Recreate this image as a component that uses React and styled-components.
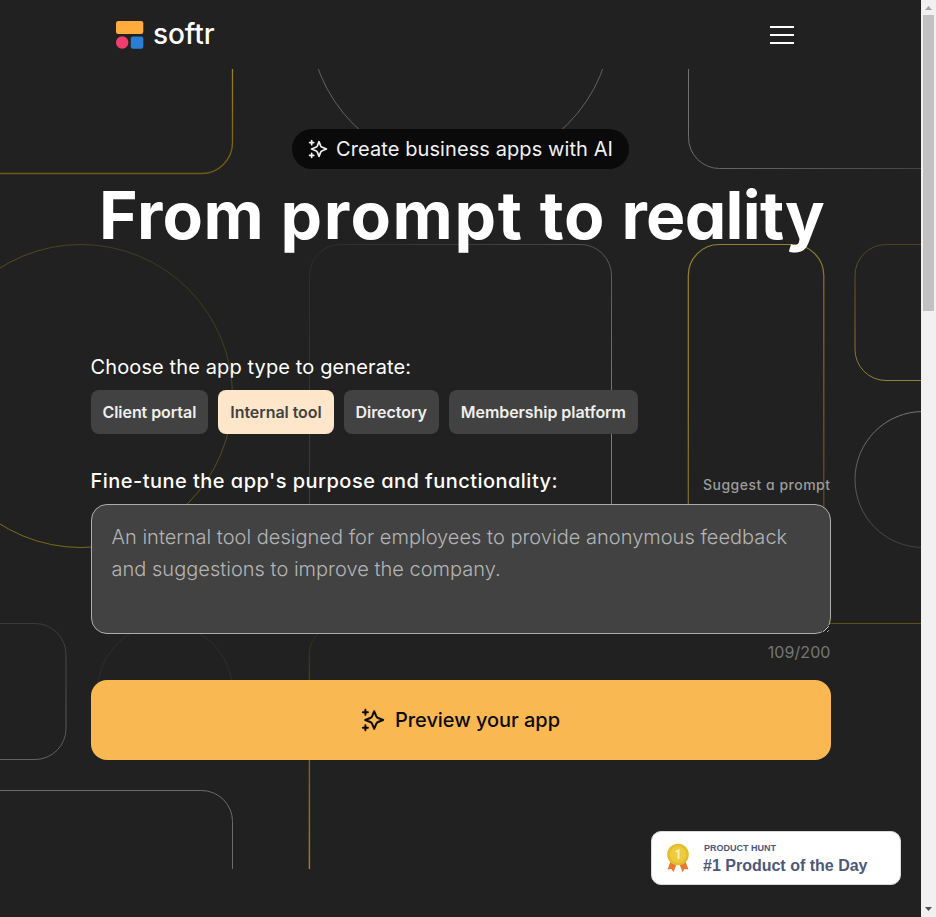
import React from "react";
import styled, { createGlobalStyle } from "styled-components";

const GlobalStyle = createGlobalStyle`
  *, *::before, *::after { box-sizing: border-box; }
  body { margin: 0; background: #212121; overflow: hidden; }
  button, textarea { font-family: inherit; }
`;

const Window = styled.div`
  display: flex;
  width: 936px;
  height: 917px;
  font-family: Inter, "Liberation Sans", sans-serif;
  color: #fff;
  overflow: hidden;
`;

const Page = styled.div`
  position: relative;
  flex: 1;
  min-width: 0;
  display: flex;
  flex-direction: column;
  background: #212121;
`;

const Header = styled.header`
  display: flex;
  align-items: center;
  justify-content: space-between;
  height: 69px;
  padding: 1px 127px 0 116px;
`;

const Brand = styled.a`
  display: flex;
  align-items: center;
  gap: 9px;
`;

const BrandMark = styled.svg`
  display: block;
  width: 28px;
  height: 28px;
`;

const BrandName = styled.span`
  font-size: 28px;
  font-weight: 500;
  line-height: 32px;
  margin-top: -2px;
  letter-spacing: -0.1px;
  font-feature-settings: "cv11";
`;

const MenuButton = styled.button`
  display: flex;
  flex-direction: column;
  gap: 6px;
  width: 24px;
  padding: 0;
  border: 0;
  background: none;
`;

const MenuLine = styled.span`
  height: 2px;
  background: #fff;
`;

const Hero = styled.main`
  position: relative;
  flex: 1;
`;

const Pattern = styled.svg`
  position: absolute;
  top: 0;
  left: 0;
  width: 921px;
  height: 800px;
`;

const Content = styled.div`
  position: relative;
  display: flex;
  flex-direction: column;
  width: 740px;
  margin: 0 auto;
  padding-top: 60px;
`;

const Pill = styled.div`
  display: flex;
  align-items: center;
  align-self: center;
  gap: 8px;
  height: 40px;
  padding: 0 16px;
  border-radius: 20px;
  background: #0a0a0a;
  color: #f2f2f2;
  font-size: 20px;
  letter-spacing: 0.09px;
`;

const Sparkle = styled.svg`
  display: block;
  flex: none;
  width: ${(p) => p.$size}px;
  height: ${(p) => p.$size}px;
`;

const Title = styled.h1`
  margin: 6px 0 0;
  padding-left: 2px;
  height: 80px;
  font-size: 66px;
  font-weight: 700;
  line-height: 80px;
  letter-spacing: 0.7px;
  text-align: center;
  white-space: nowrap;
  font-feature-settings: "cv11";
`;

const Word = styled.span`
  letter-spacing: ${(p) => p.$track}px;
`;

const Form = styled.form`
  display: flex;
  flex-direction: column;
  margin-top: 99px;
`;

const Label = styled.label`
  font-size: 20px;
  font-weight: ${(p) => (p.$geometric ? 500 : 400)};
  line-height: 26px;
  letter-spacing: ${(p) => (p.$geometric ? "0.47px" : "0.12px")};
  font-feature-settings: ${(p) => (p.$geometric ? '"cv11"' : "normal")};
  white-space: nowrap;
`;

const TypeList = styled.div`
  display: flex;
  gap: 10px;
  margin-top: 10px;
`;

const TypeButton = styled.button`
  height: 44px;
  padding: 0 12px;
  border: 0;
  border-radius: 8px;
  background: ${(p) => (p.$active ? "#fde6ca" : "#424242")};
  color: ${(p) => (p.$active ? "#424242" : "#efefef")};
  font-size: 16px;
  font-weight: 600;
  letter-spacing: -0.06px;
  white-space: nowrap;
`;

const PromptHead = styled.div`
  display: flex;
  align-items: flex-start;
  justify-content: space-between;
  margin-top: 34px;
  height: 36px;
`;

const Suggest = styled.button`
  padding: 0;
  margin-top: 7px;
  border: 0;
  background: none;
  color: #9c9c9c;
  font-size: 14px;
  font-weight: 500;
  line-height: 20px;
  letter-spacing: 0.5px;
  font-feature-settings: "cv11";
`;

const PromptInput = styled.textarea`
  display: block;
  width: 100%;
  height: 130px;
  padding: 16px 20px;
  border: 1px solid #acacac;
  border-radius: 16px;
  outline: 0;
  background: #424242;
  color: #b4b4b4;
  font-size: 20px;
  font-weight: 300;
  line-height: 32px;
  letter-spacing: 0.02px;
`;

const Counter = styled.div`
  margin-top: 8px;
  color: #767676;
  font-size: 16px;
  line-height: 20px;
  letter-spacing: 0.08px;
  text-align: right;
`;

const PreviewButton = styled.button`
  display: flex;
  align-items: center;
  justify-content: center;
  gap: 10px;
  height: 80px;
  margin-top: 18px;
  border: 0;
  border-radius: 16px;
  background: #f9b852;
  color: #0c0a06;
  font-size: 20px;
  font-weight: 500;
  letter-spacing: -0.05px;
`;

const HuntBadge = styled.a`
  position: absolute;
  right: 20px;
  bottom: 32px;
  display: flex;
  align-items: center;
  gap: 14px;
  width: 250px;
  height: 54px;
  padding-left: 15px;
  border: 1px solid #d9d9df;
  border-radius: 10px;
  background: #fff;
  color: #4b587c;
  font-family: "Liberation Sans", Arial, sans-serif;
  font-weight: 700;
`;

const Medal = styled.svg`
  display: block;
  width: 22px;
  height: 30px;
`;

const HuntText = styled.div`
  display: flex;
  flex-direction: column;
`;

const HuntSource = styled.span`
  padding-left: 1px;
  font-size: 9px;
  line-height: 14px;
`;

const HuntRank = styled.span`
  margin-top: 1px;
  font-size: 16px;
  line-height: 20px;
`;

const Scrollbar = styled.div`
  display: flex;
  flex-direction: column;
  align-items: center;
  width: 15px;
  background: #f1f1f1;
`;

const ScrollArrow = styled.svg`
  display: block;
  width: 15px;
  height: 15px;
`;

const ScrollTrack = styled.div`
  flex: 1;
`;

const ScrollThumb = styled.div`
  width: 11px;
  height: 296px;
  background: #c1c1c1;
`;

function SparkleIcon({ size }) {
  return (
    <Sparkle $size={size} viewBox="0 0 24 24" fill="none" stroke="currentColor" strokeWidth="2" strokeLinecap="round" strokeLinejoin="round">
      <path d="M13.2 3.2 15.2 8.2Q15.8 9.5 17.1 10L22.2 12 17.1 14Q15.8 14.5 15.2 15.8L13.2 20.8 11.2 15.8Q10.6 14.5 9.3 14L4.2 12 9.3 10Q10.6 9.5 11.2 8.2Z" />
      <path d="M4.4 1.8v5M1.9 4.3h5M4.4 17.2v5M1.9 19.7h5" />
    </Sparkle>
  );
}

function GridPattern() {
  return (
    <Pattern viewBox="0 69 921 800" fill="none">
      <defs>
        <linearGradient id="goldDown" gradientUnits="userSpaceOnUse" x1="0" y1="69" x2="0" y2="173">
          <stop stopColor="#9c8026" />
          <stop offset="1" stopColor="#705a10" />
        </linearGradient>
        <linearGradient id="grayDown" gradientUnits="userSpaceOnUse" x1="688" y1="69" x2="921" y2="168">
          <stop stopColor="#737373" />
          <stop offset="1" stopColor="#444444" />
        </linearGradient>
        <linearGradient id="goldCircle" gradientUnits="userSpaceOnUse" x1="190" y1="290" x2="0" y2="500">
          <stop stopColor="#3e3a20" />
          <stop offset="1" stopColor="#80691c" />
        </linearGradient>
        <linearGradient id="panel" gradientUnits="userSpaceOnUse" x1="309" y1="245" x2="611" y2="430">
          <stop stopColor="#2b2b2b" />
          <stop offset="0.6" stopColor="#454545" />
          <stop offset="1" stopColor="#7a7a7a" />
        </linearGradient>
        <linearGradient id="tallGold" gradientUnits="userSpaceOnUse" x1="688" y1="400" x2="824" y2="500">
          <stop stopColor="#94802d" />
          <stop offset="1" stopColor="#5b501f" />
        </linearGradient>
        <linearGradient id="sideGold" gradientUnits="userSpaceOnUse" x1="900" y1="245" x2="900" y2="380">
          <stop stopColor="#4b4422" />
          <stop offset="1" stopColor="#94813a" />
        </linearGradient>
        <linearGradient id="sideCircle" gradientUnits="userSpaceOnUse" x1="880" y1="411" x2="900" y2="547">
          <stop stopColor="#777777" />
          <stop offset="1" stopColor="#414141" />
        </linearGradient>
        <linearGradient id="leftBox" gradientUnits="userSpaceOnUse" x1="0" y1="624" x2="0" y2="760">
          <stop stopColor="#3a3a3a" />
          <stop offset="1" stopColor="#636363" />
        </linearGradient>
        <linearGradient id="goldStem" gradientUnits="userSpaceOnUse" x1="0" y1="640" x2="0" y2="869">
          <stop stopColor="#2b2921" />
          <stop offset="0.5" stopColor="#7c6010" />
          <stop offset="1" stopColor="#a58114" />
        </linearGradient>
      </defs>
      <path stroke="url(#goldDown)" strokeWidth="1.3" d="M0 173.5H201.5A31 31 0 0 0 232.5 142.5V69" />
      <circle stroke="#626262" cx="460.5" cy="17" r="151.5" />
      <path stroke="url(#grayDown)" d="M688.5 69V137.5A31 31 0 0 0 719.5 168.5H921" />
      <circle stroke="url(#goldCircle)" cx="81" cy="396" r="151.5" />
      <rect stroke="url(#panel)" x="309.5" y="244.5" width="302" height="303" rx="31" />
      <rect stroke="url(#tallGold)" strokeWidth="1.2" x="688.3" y="244.5" width="135.5" height="303" rx="31" />
      <rect stroke="url(#sideGold)" x="855" y="244.5" width="136" height="136" rx="31" />
      <circle stroke="url(#sideCircle)" cx="923" cy="479.5" r="68" />
      <path stroke="#5e4f14" strokeWidth="1.2" d="M800 623.5H921" />
      <rect stroke="url(#leftBox)" x="-70" y="623.5" width="136" height="136" rx="31" />
      <circle stroke="#2e2e2e" cx="165" cy="691.5" r="67.5" />
      <path stroke="url(#goldStem)" strokeWidth="1.4" d="M340 623.5A31 31 0 0 0 309.4 654.5V869" />
      <path stroke="#6c6c6c" d="M0 790.5H201.5A31 31 0 0 1 232.5 821.5V869" />
    </Pattern>
  );
}

const appTypes = ["Client portal", "Internal tool", "Directory", "Membership platform"];

export default function App() {
  return (
    <Window>
      <GlobalStyle />
      <Page>
        <Header>
          <Brand>
            <BrandMark viewBox="0 0 28 28">
              <rect width="27.3" height="13" rx="2.3" fill="#ffab3d" />
              <circle cx="6.2" cy="21.5" r="6.2" fill="#ef3e6e" />
              <rect x="14.8" y="15.4" width="12.5" height="12.4" rx="2" fill="#2a7fd4" />
            </BrandMark>
            <BrandName>softr</BrandName>
          </Brand>
          <MenuButton type="button" aria-label="Menu">
            <MenuLine />
            <MenuLine />
            <MenuLine />
          </MenuButton>
        </Header>
        <Hero>
          <GridPattern />
          <Content>
            <Pill>
              <SparkleIcon size={20} />
              Create business apps with AI
            </Pill>
            <Title>
              <Word $track={0.4}>From</Word> <Word $track={1.6}>prompt</Word> <Word $track={0.7}>to</Word>{" "}
              <Word $track={-0.7}>reality</Word>
            </Title>
            <Form>
              <Label>Choose the app type to generate:</Label>
              <TypeList>
                {appTypes.map((name) => (
                  <TypeButton key={name} type="button" $active={name === "Internal tool"}>
                    {name}
                  </TypeButton>
                ))}
              </TypeList>
              <PromptHead>
                <Label $geometric htmlFor="prompt">Fine-tune the app's purpose and functionality:</Label>
                <Suggest type="button">Suggest a prompt</Suggest>
              </PromptHead>
              <PromptInput
                id="prompt"
                spellCheck={false}
                defaultValue="An internal tool designed for employees to provide anonymous feedback and suggestions to improve the company."
              />
              <Counter>109/200</Counter>
              <PreviewButton type="button">
                <SparkleIcon size={24} />
                Preview your app
              </PreviewButton>
            </Form>
          </Content>
        </Hero>
        <HuntBadge>
          <Medal viewBox="0 0 22 30">
            <path fill="#e8792f" d="M4 17 .5 26.5l4-.5 2 3.3L10 20ZM18 17l3.5 9.5-4-.5-2 3.3L12 20Z" />
            <circle cx="11" cy="11.5" r="10.8" fill="#e3bd2e" />
            <circle cx="11" cy="11.5" r="8.3" fill="#eccb3f" />
            <path fill="none" stroke="#fbf0b5" strokeWidth="2" d="M8.8 9 11.5 7.4V16" />
          </Medal>
          <HuntText>
            <HuntSource>PRODUCT HUNT</HuntSource>
            <HuntRank>#1 Product of the Day</HuntRank>
          </HuntText>
        </HuntBadge>
      </Page>
      <Scrollbar>
        <ScrollArrow viewBox="0 0 15 15">
          <path fill="#a3a3a3" d="M7.5 6 11 10H4Z" />
        </ScrollArrow>
        <ScrollThumb />
        <ScrollTrack />
        <ScrollArrow viewBox="0 0 15 15">
          <path fill="#505050" d="M4 5h7L7.5 9Z" />
        </ScrollArrow>
      </Scrollbar>
    </Window>
  );
}
